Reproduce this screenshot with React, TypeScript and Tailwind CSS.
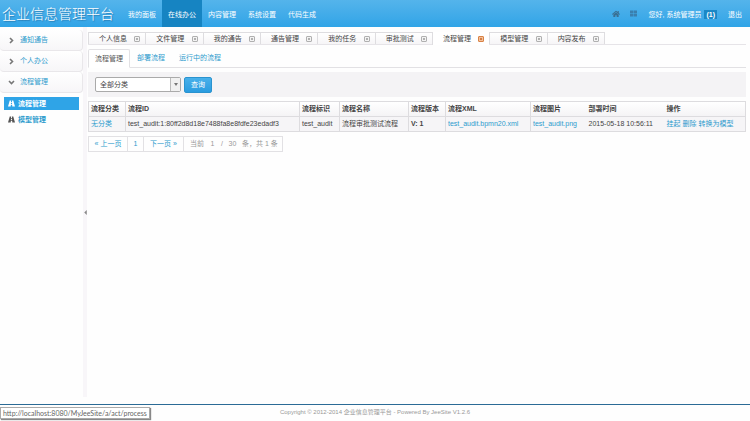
import { FaHome, FaThLarge } from 'react-icons/fa'
import clsx from 'clsx'

const navItems = ['我的面板', '在线办公', '内容管理', '系统设置', '代码生成']
const menuGroups = ['通知通告', '个人办公', '流程管理']
const menuItems = ['流程管理', '模型管理']
const pageTabs = ['个人信息', '文件管理', '我的通告', '通告管理', '我的任务', '审批测试', '流程管理', '模型管理', '内容发布']
const subTabs = ['流程管理', '部署流程', '运行中的流程']

const columns = [
  { title: '流程分类', width: 'w-[37px]', line: false },
  { title: '流程ID', width: 'w-[174px]', line: true },
  { title: '流程标识', width: 'w-[40px]', line: true },
  { title: '流程名称', width: 'w-[69px]', line: true },
  { title: '流程版本', width: 'w-[37px]', line: true },
  { title: '流程XML', width: 'w-[85px]', line: true },
  { title: '流程图片', width: 'w-[56px]', line: true },
  { title: '部署时间', width: 'w-[78px]', line: false },
  { title: '操作', width: '', line: false },
]

const CloseIcon = ({ active }: { active: boolean }) => (
  <svg viewBox="0 0 12 12" className="size-[6px]">
    <rect x="1" y="1" width="10" height="10" rx="1" fill={active ? '#f3c19c' : '#f3f3f3'} stroke={active ? '#d98245' : '#b0b0b0'} strokeWidth="2" />
    <path d="M4 4l4 4M8 4l-4 4" stroke={active ? '#c8682a' : '#999'} strokeWidth="1.5" />
  </svg>
)

const Chevron = ({ open }: { open: boolean }) => (
  <svg viewBox="0 0 14 14" className="size-[7px]" fill="none" stroke="#777" strokeWidth="3.2">
    <path d={open ? 'M2 4l5 5 5-5' : 'M4 2l5 5-5 5'} />
  </svg>
)

const RoadIcon = ({ className }: { className: string }) => (
  <svg viewBox="0 0 14 14" className={clsx('h-[7px] w-[7px]', className)} fill="currentColor">
    <path d="M3.5 1h2.7L6 4h2l-.2-3h2.7L14 13H8.6l-.3-3.5H5.7L5.4 13H0zM6 5.5L5.8 8h2.4L8 5.5z" fillRule="evenodd" />
  </svg>
)

const Header = () => (
  <header className="flex h-[27px] shrink-0 items-stretch bg-gradient-to-b from-[#54b4eb] to-[#2fa4e7] text-[7px] text-white">
    <h1 className="mr-[8px] flex w-[114px] items-center pl-[2px] text-[14px] font-light whitespace-nowrap text-shadow-[1px_1px_1px_#2a7fb5]">
      企业信息管理平台
    </h1>
    <nav className="flex">
      {navItems.map((item, i) => (
        <a key={item} href="#" className={clsx('flex items-center px-[6px] pt-[2px] whitespace-nowrap', i === 1 && 'bg-[#1684c2]')}>
          {item}
        </a>
      ))}
    </nav>
    <div className="ml-auto flex items-center pr-[8px] whitespace-nowrap">
      <a href="#" aria-label="首页" className="text-[#3a6f92]"><FaHome size={8} /></a>
      <a href="#" aria-label="主题" className="ml-[10px] text-[#3a7fae]"><FaThLarge size={7} /></a>
      <a href="#" className="ml-[12px] flex items-center pt-[2px]">
        您好, 系统管理员
        <span className="ml-[3px] bg-[#1a87c6] px-[2px] leading-[9px] font-bold">(1)</span>
      </a>
      <a href="#" className="ml-[11px] pt-[2px]">退出</a>
    </div>
  </header>
)

const Sidebar = () => (
  <aside className="w-[83px] shrink-0 pt-[3px] text-[7px] text-[#2d9bcd]">
    {menuGroups.map((group, i) => (
      <a key={group} href="#" className="flex h-[21px] items-center gap-[5px] rounded-sm border border-l-0 border-t-0 border-[#e9e7ea] bg-gradient-to-b from-white to-[#f7f6f8] pl-[8px]">
        <Chevron open={i === 2} />
        {group}
      </a>
    ))}
    <ul className="flex flex-col gap-[3px] px-[4px] pt-[4px]">
      {menuItems.map((item, i) => (
        <li key={item}>
          <a href="#" className={clsx('flex h-[13px] items-center gap-[3px] pl-[4px] font-bold', i === 0 && 'bg-[#2fa4e7] text-white')}>
            <RoadIcon className={i === 0 ? 'text-white' : 'text-[#555]'} />
            {item}
          </a>
        </li>
      ))}
    </ul>
  </aside>
)

const PageTabs = () => (
  <div className="flex h-[14px] border-b border-[#e6e4e8]">
    <div className="flex w-[517px] items-end">
      {pageTabs.map((tab, i) => {
        const active = i === 6
        return (
          <div
            key={tab}
            className={clsx(
              'flex flex-1 items-center justify-between border-l border-[#dedde0] pr-[5px] pl-[10px] last:border-r',
              active ? '-mb-px h-[13px] bg-white' : 'h-[12px] border-t bg-gradient-to-b from-white to-[#f6f5f7]',
            )}
          >
            <a href="#">{tab}</a>
            <button aria-label={`关闭${tab}`}><CloseIcon active={active} /></button>
          </div>
        )
      })}
    </div>
  </div>
)

const SearchForm = () => (
  <form className="mt-[4px] flex h-[25px] items-center bg-[#f4f3f5] pl-[7px]">
    <div className="flex h-[15px] w-[86px] items-stretch rounded-xs border border-[#aaa] bg-white">
      <select aria-label="流程分类" className="min-w-0 flex-1 appearance-none pl-[4px] outline-none">
        <option>全部分类</option>
      </select>
      <span className="flex w-[10px] items-center justify-center border-l border-[#bbb] bg-[#f1f1f1]">
        <svg viewBox="0 0 8 6" className="h-[3px] w-[4px]"><path d="M0 0h8L4 6z" fill="#777" /></svg>
      </span>
    </div>
    <button type="button" className="ml-[3px] h-[16px] w-[28px] rounded-xs border border-[#2a93cf] bg-gradient-to-b from-[#48b0ea] to-[#2a9ce0] text-white">
      查询
    </button>
  </form>
)

const ProcessTable = () => (
  <table className="mt-[4px] w-full table-fixed border border-[#dddcdf] text-left whitespace-nowrap">
    <thead>
      <tr className="h-[15px] bg-gradient-to-b from-white to-[#f4f3f5]">
        {columns.map((col) => (
          <th key={col.title} className={clsx('p-0 pl-[2px] font-bold', col.width, col.line && 'border-l border-[#dddcdf]')}>
            {col.title}
          </th>
        ))}
      </tr>
    </thead>
    <tbody>
      <tr className="h-[15px] border-t border-[#dddcdf] bg-[#f6f5f7] [&>td]:pl-[2px]">
        <td><a href="#" className="text-[#2d9bcd]">无分类</a></td>
        <td className="border-l border-[#dddcdf]">test_audit:1:80ff2d8d18e7488fa8e8fdfe23edadf3</td>
        <td className="border-l border-[#dddcdf]">test_audit</td>
        <td className="border-l border-[#dddcdf]">流程审批测试流程</td>
        <td className="border-l border-[#dddcdf] font-bold">V: 1</td>
        <td className="border-l border-[#dddcdf]"><a href="#" className="text-[#2d9bcd]">test_audit.bpmn20.xml</a></td>
        <td className="border-l border-[#dddcdf]"><a href="#" className="text-[#2d9bcd]">test_audit.png</a></td>
        <td>2015-05-18 10:56:11</td>
        <td className="text-[#2d9bcd]"><a href="#">挂起</a> <a href="#">删除</a> <a href="#">转换为模型</a></td>
      </tr>
    </tbody>
  </table>
)

const Pager = () => (
  <div className="mt-[4px] flex">
    <div className="flex h-[16px] items-stretch border border-[#e2e1e4] text-[#2d9bcd]">
      <button className="w-[38px]">« 上一页</button>
      <button className="w-[17px] border-x border-[#e2e1e4]">1</button>
      <button className="w-[39px]">下一页 »</button>
      <div className="flex items-center border-l border-[#e2e1e4] pl-[6px] text-[#999]">
        当前
        <input aria-label="页码" defaultValue="1" className="w-[17px] text-center outline-none" />
        /
        <input aria-label="每页条数" defaultValue="30" className="w-[19px] text-center outline-none" />
        <span className="pr-[4px] whitespace-nowrap">条，共 1 条</span>
      </div>
    </div>
  </div>
)

export default function App() {
  return (
    <div className="flex min-h-screen flex-col bg-[#fefefe] font-['Liberation_Sans','Noto_Sans_CJK_SC',sans-serif] text-[7px] leading-[10px] text-[#444]">
      <Header />
      <div className="flex flex-1">
        <Sidebar />
        <div className="mb-[7px] flex w-[4px] shrink-0 items-center justify-center bg-[#f8f6f9]">
          <svg viewBox="0 0 4 8" className="h-[5px] w-[3px]"><path d="M4 0v8L0 4z" fill="#888" /></svg>
        </div>
        <main className="min-w-0 flex-1 pt-[4px] pr-[4px] pl-px">
          <PageTabs />
          <div className="mt-[4px] flex h-[19px] items-stretch border-b border-[#e2e1e4] text-[#2d9bcd]">
            {subTabs.map((tab, i) => (
              <a key={tab} href="#" className={clsx('flex items-center border px-[6px]', i === 0 ? '-mb-px rounded-t-xs border-[#e2e1e4] border-b-white bg-white text-[#555]' : 'border-transparent')}>
                {tab}
              </a>
            ))}
          </div>
          <SearchForm />
          <ProcessTable />
          <Pager />
        </main>
      </div>
      <footer className="relative h-[17px] shrink-0 border-t border-[#2b6b96] text-center text-[6px] leading-[15px] text-[#999]">
        Copyright © 2012-2014 <a href="#">企业信息管理平台</a> - Powered By JeeSite V1.2.6
        <div className="absolute top-[2px] left-0 border border-[#aaa] bg-white px-[2px] font-['Lato',sans-serif] text-[7px] leading-[10px] text-[#666] shadow-[1px_1px_1px_#888]">
          http://localhost:8080/MyJeeSite/a/act/process
        </div>
      </footer>
    </div>
  )
}
